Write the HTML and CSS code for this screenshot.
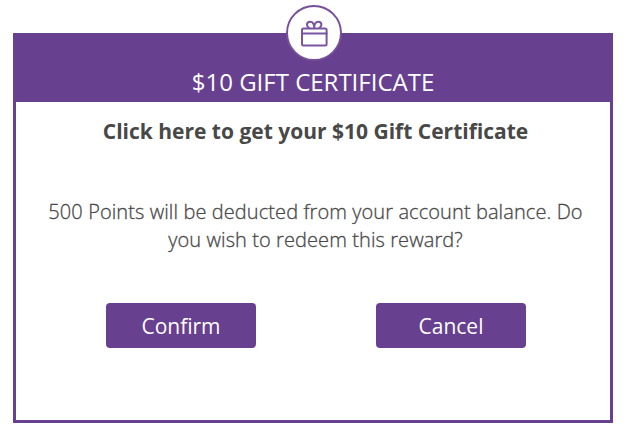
FILE: index.html
```html
<!DOCTYPE html>
<html lang="en">
<head>
<meta charset="utf-8">
<title>$10 Gift Certificate</title>
<link rel="stylesheet" href="styles.css">
</head>
<body>
<section class="card">
  <div class="badge">
    <svg class="gift" viewBox="0 0 52 52" fill="none" stroke="#7b559f" stroke-width="2" stroke-linejoin="round" stroke-linecap="round">
      <rect x="14" y="21.5" width="24.6" height="17" rx="1.5"/>
      <path d="M14 26.5h24.6"/>
      <path d="M26.2 21.200c0-4-1.600-6.500-4-6.500-2 0-3.200 1.500-3.200 3.100 0 1.400.8 2.500 2 3.100M26.200 21.200c0-4 1.600-6.500 4-6.500 2 0 3.200 1.500 3.200 3.100 0 1.400-.8 2.500-2 3.100"/>
    </svg>
  </div>
  <header class="head"><h1 class="title">$10 GIFT CERTIFICATE</h1></header>
  <div class="body">
    <h2 class="lead">Click here to get your $10 Gift Certificate</h2>
    <p class="text">500 Points will be deducted from your account balance. Do<br>you wish to redeem this reward?</p>
    <div class="actions">
      <button class="btn">Confirm</button>
      <button class="btn">Cancel</button>
    </div>
  </div>
</section>
</body>
</html>
```
FILE: styles.css
```css
* { box-sizing: border-box; }
body { margin: 0; background: #fff; font-family: "Open Sans", sans-serif; color: #484848; }
.card { position: relative; width: 600px; height: 390px; margin: 33px 0 0 13px; border: 3px solid #684090; }
.badge { position: absolute; left: 270px; top: -31px; width: 56px; height: 56px; border: 2.5px solid #76509b; border-radius: 50%; background: #fff; }
.gift { display: block; width: 52px; height: 52px; }
.head { height: 66px; background: #684090; padding-top: 29px; }
.title { margin: 0; font-size: 24px; line-height: 33px; font-weight: 400; color: #fff; text-align: center; }
.body { padding: 15px 0 0 5px; text-align: center; }
.lead { margin: 0 0 53px; font-size: 21px; line-height: 28px; font-weight: 700; }
.text { margin: 0; font-size: 20px; line-height: 28px; font-weight: 300; letter-spacing: 0.09px; color: #484848; -webkit-text-stroke: 0.3px #484848; }
.actions { display: flex; justify-content: center; gap: 120px; margin: 49px 0 0 1px; }
.btn { width: 150px; height: 45px; border: 0; border-radius: 4px; padding: 2px 0 0; background: #684090; color: #fff; font: 400 21px/43px "Open Sans", sans-serif; }
```
